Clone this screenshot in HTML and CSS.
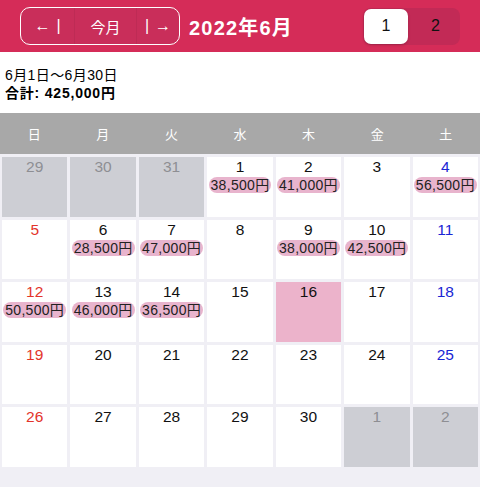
FILE: index.html
```html
<!DOCTYPE html>
<html lang="ja">
<head>
<meta charset="utf-8">
<link rel="stylesheet" href="styles.css">
</head>
<body>
<header class="topbar">
  <div class="nav">
    <span class="nav-seg"><span class="arrow">←</span><span class="bar">|</span></span>
    <span class="nav-seg">今月</span>
    <span class="nav-seg"><span class="bar">|</span><span class="arrow">→</span></span>
  </div>
  <h1 class="title">2022年6月</h1>
  <div class="seg">
    <span class="seg-item active">1</span>
    <span class="seg-item">2</span>
  </div>
</header>
<section class="info">
  <div class="range">6月1日〜6月30日</div>
  <div class="total">合計: 425,000円</div>
</section>
<div class="weekdays">
  <span>日</span><span>月</span><span>火</span><span>水</span><span>木</span><span>金</span><span>土</span>
</div>
<div class="grid">
  <div class="cell other"><span class="num">29</span></div>
  <div class="cell other"><span class="num">30</span></div>
  <div class="cell other"><span class="num">31</span></div>
  <div class="cell"><span class="num">1</span><span class="amt">38,500円</span></div>
  <div class="cell"><span class="num">2</span><span class="amt">41,000円</span></div>
  <div class="cell"><span class="num">3</span></div>
  <div class="cell sat"><span class="num">4</span><span class="amt">56,500円</span></div>

  <div class="cell sun"><span class="num">5</span></div>
  <div class="cell"><span class="num">6</span><span class="amt">28,500円</span></div>
  <div class="cell"><span class="num">7</span><span class="amt">47,000円</span></div>
  <div class="cell"><span class="num">8</span></div>
  <div class="cell"><span class="num">9</span><span class="amt">38,000円</span></div>
  <div class="cell"><span class="num">10</span><span class="amt">42,500円</span></div>
  <div class="cell sat"><span class="num">11</span></div>

  <div class="cell sun"><span class="num">12</span><span class="amt">50,500円</span></div>
  <div class="cell"><span class="num">13</span><span class="amt">46,000円</span></div>
  <div class="cell"><span class="num">14</span><span class="amt">36,500円</span></div>
  <div class="cell"><span class="num">15</span></div>
  <div class="cell today"><span class="num">16</span></div>
  <div class="cell"><span class="num">17</span></div>
  <div class="cell sat"><span class="num">18</span></div>

  <div class="cell sun"><span class="num">19</span></div>
  <div class="cell"><span class="num">20</span></div>
  <div class="cell"><span class="num">21</span></div>
  <div class="cell"><span class="num">22</span></div>
  <div class="cell"><span class="num">23</span></div>
  <div class="cell"><span class="num">24</span></div>
  <div class="cell sat"><span class="num">25</span></div>

  <div class="cell sun"><span class="num">26</span></div>
  <div class="cell"><span class="num">27</span></div>
  <div class="cell"><span class="num">28</span></div>
  <div class="cell"><span class="num">29</span></div>
  <div class="cell"><span class="num">30</span></div>
  <div class="cell other"><span class="num">1</span></div>
  <div class="cell other"><span class="num">2</span></div>
</div>
</body>
</html>
```
FILE: styles.css
```css
* { box-sizing: border-box; }
html, body { margin: 0; padding: 0; }
body {
  width: 480px;
  height: 487px;
  overflow: hidden;
  background: #f0eff5;
  font-family: "Liberation Sans", "Noto Sans CJK JP", sans-serif;
  color: #111;
}
.topbar {
  height: 52px;
  background: #d52c58;
  display: flex;
  align-items: center;
  padding: 0 20px;
}
.nav {
  width: 160px;
  height: 38px;
  border: 1.5px solid #fff;
  border-radius: 10px;
  background: #c92e5a;
  display: grid;
  grid-template-columns: 53px 62px 1fr;
  color: #fff;
  font-size: 15px;
}
.nav-seg {
  display: flex;
  align-items: center;
  justify-content: center;
  gap: 6px;
}
.nav-seg + .nav-seg { border-left: 1px solid rgba(0, 0, 0, 0.05); }
.arrow { font-size: 16px; }
.bar { font-size: 16px; font-weight: 300; }
.title {
  margin: 0 0 0 9px;
  font-size: 20px;
  font-weight: bold;
  color: #fff;
  flex: 1;
  letter-spacing: 1.2px;
}
.seg {
  width: 97px;
  height: 37px;
  background: #c22a56;
  border-radius: 8px;
  display: flex;
  padding: 1px;
}
.seg-item {
  flex: 1;
  display: flex;
  align-items: center;
  justify-content: center;
  font-size: 16px;
  color: #111;
}
.seg-item.active {
  flex: 0 0 44px;
  background: #fff;
  border-radius: 7px;
  box-shadow: 0 1px 3px rgba(0, 0, 0, 0.2);
}
.seg-item:last-child { padding-left: 4px; }
.info {
  background: #fff;
  padding: 14px 5px 11px;
  font-size: 14px;
  line-height: 18px;
  color: #000;
  letter-spacing: 0.4px;
}
.total { font-weight: bold; letter-spacing: 0.8px; }
.weekdays {
  height: 41px;
  background: #a8a8a8;
  display: grid;
  grid-template-columns: repeat(7, 1fr);
  align-items: center;
  text-align: center;
  color: #fff;
  font-size: 13px;
}
.grid {
  display: grid;
  grid-template-columns: repeat(7, 1fr);
  grid-auto-rows: 59.5px;
  gap: 3px;
  padding: 3px 2px 0;
}
.cell {
  background: #fff;
  display: flex;
  flex-direction: column;
  align-items: center;
  padding-top: 1px;
}
.num {
  font-size: 15.5px;
  line-height: 18px;
}
.amt {
  margin-top: 1px;
  background: #e8b4cd;
  border-radius: 8px;
  font-size: 14px;
  line-height: 16px;
  padding: 0 2px;
  white-space: nowrap;
  color: #222;
  letter-spacing: 0.3px;
}
.sun .num { color: #e3342b; }
.sat .num { color: #1a26d4; }
.other { background: #cdced4; }
.other .num { color: #8e8e93; }
.today { background: #ecb3cb; }
```
